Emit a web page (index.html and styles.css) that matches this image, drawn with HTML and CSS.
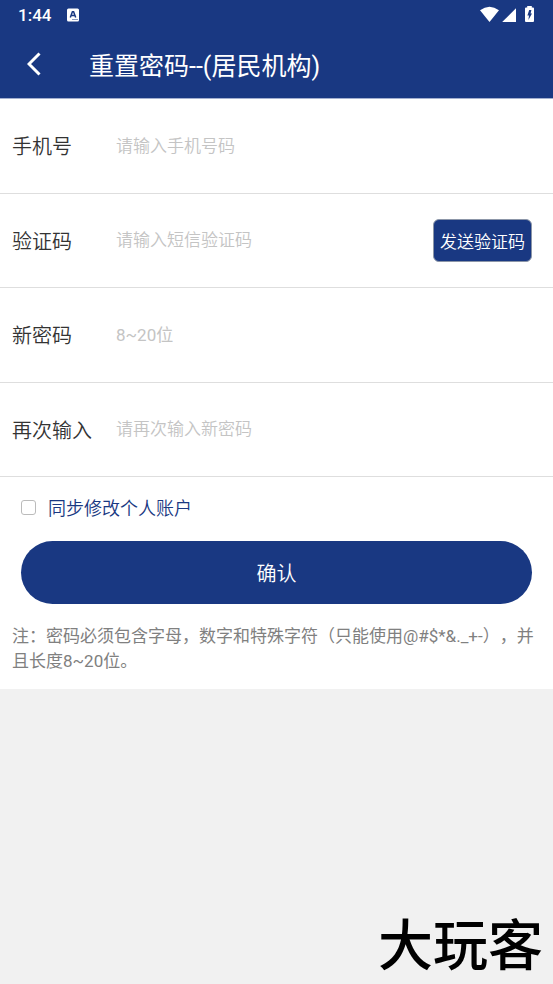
FILE: index.html
```html
<!DOCTYPE html>
<html lang="zh-CN">
<head>
<meta charset="utf-8">
<meta name="viewport" content="width=device-width, initial-scale=1">
<title>重置密码</title>
<link rel="stylesheet" href="styles.css">
</head>
<body>
<header class="top">
  <div class="status">
    <span class="clock">1:44</span>
    <svg class="keyboard" width="12" height="14" viewBox="0 0 12 14" aria-hidden="true">
      <rect width="12" height="13" y="0.5" rx="1.5" fill="#fff"/>
      <path d="M3.3 9.5 5.4 3.8h1.2l2.1 5.7M4.2 7.6h3.6" fill="none" stroke="#193882" stroke-width="1.5"/>
      <path d="M5.5 11.5h5" stroke="#193882" stroke-width="1" stroke-dasharray="1 1"/>
    </svg>
    <svg class="signals" width="56" height="18" viewBox="0 0 56 18" aria-hidden="true">
      <path d="M1 5.2Q10.500-1.800 20 5.200L10.500 17Z" fill="#fff"/>
      <path d="M37 3.200V17H23.200Z" fill="#fff"/>
      <path d="M48.200 1h4.600v1.500H54q1 0 1 1V16q0 1-1 1h-7q-1 0-1-1V3.500q0-1 1-1h1.200Z" fill="#fff"/>
      <path d="M50.200 5h2.200l-.8 3.500h1.400L49.400 15l.6-4.500h-1.600Z" fill="#193882"/>
    </svg>
  </div>
  <div class="bar">
    <button class="back" type="button" aria-label="返回">
      <svg width="14" height="24" viewBox="0 0 14 24" aria-hidden="true"><path d="M12.500 1.500 2 12l10.500 10.500" fill="none" stroke="#fff" stroke-width="3"/></svg>
    </button>
    <h1>重置密码--(居民机构)</h1>
  </div>
</header>
<main>
  <form class="form">
    <div class="fields">
      <div class="row">
        <label for="phone">手机号</label>
        <input id="phone" type="tel" placeholder="请输入手机号码">
      </div>
      <div class="row">
        <label for="code">验证码</label>
        <input id="code" type="text" placeholder="请输入短信验证码">
        <button class="send" type="button">发送验证码</button>
      </div>
      <div class="row">
        <label for="password">新密码</label>
        <input id="password" class="regular" type="password" placeholder="8~20位">
      </div>
      <div class="row">
        <label for="again">再次输入</label>
        <input id="again" type="password" placeholder="请再次输入新密码">
      </div>
    </div>
    <div class="actions">
      <label class="sync"><input type="checkbox">同步修改个人账户</label>
      <button class="confirm" type="submit">确认</button>
    </div>
    <p class="note">注：密码必须包含字母，数字和特殊字符（只能使用@#$*&amp;._+-），并且长度8~20位。</p>
  </form>
</main>
<footer class="brand">大玩客</footer>
</body>
</html>
```
FILE: styles.css
```css
* {
  box-sizing: border-box;
}

body {
  display: flex;
  flex-direction: column;
  min-height: 100vh;
  margin: 0;
  background: #f1f1f1;
  color: #333;
  font-family: Roboto, "Noto Sans CJK SC", sans-serif;
  font-weight: 350;
}

button,
input {
  font: inherit;
}

button {
  padding: 0;
  border: 0;
  background: #193882;
  color: #fff;
}

.top {
  background: #193882;
  color: #fff;
  border-bottom: 1px solid #a3b0d0;
}

.status {
  display: flex;
  align-items: center;
  height: 30px;
  padding: 0 18px;
}

.clock {
  font-size: 17px;
  font-weight: 500;
}

.keyboard {
  margin-left: 16px;
}

.signals {
  margin-left: auto;
  margin-bottom: 2px;
}

.bar {
  display: flex;
  align-items: center;
  height: 68px;
}

.back {
  display: flex;
  margin-left: 27px;
}

h1 {
  margin: 0 0 0 48px;
  font-size: 25px;
  font-weight: 400;
}

.form {
  background: #fff;
}

.fields {
  display: grid;
  grid-auto-rows: 1fr;
  height: 378px;
}

.row {
  display: flex;
  align-items: center;
  padding: 0 21px 0 12px;
  border-bottom: 1px solid #dedede;
}

.row label {
  width: 104px;
  font-size: 20px;
}

.row input {
  flex: 1;
  min-width: 0;
  padding: 0;
  border: 0;
  outline: 0;
  background: none;
  font-size: 17px;
}

.row input::placeholder {
  color: #c4c4c4;
}

.row .regular {
  font-weight: 400;
}

.send {
  height: 43px;
  padding: 0 6px;
  border: 1px solid #8c96a8;
  border-radius: 6px;
  font-size: 17px;
}

.actions {
  display: flex;
  flex-direction: column;
  padding: 0 21px;
}

.sync {
  display: flex;
  align-items: center;
  gap: 12px;
  height: 60px;
  margin-bottom: 4px;
  color: #193882;
  font-size: 18px;
}

.sync input {
  appearance: none;
  width: 15px;
  height: 15px;
  margin: 0;
  border: 1px solid #bbb;
  border-radius: 3px;
}

.sync input:checked {
  background: #193882;
}

.confirm {
  height: 63px;
  border-radius: 32px;
  font-size: 20px;
}

.note {
  margin: 0;
  padding: 20px 12px 15px;
  color: #808080;
  font-size: 17px;
  font-weight: 400;
  line-height: 25px;
  text-spacing-trim: space-all;
}

.brand {
  margin-top: auto;
  padding: 0 10px 10px;
  color: #000;
  font-size: 55px;
  font-weight: 500;
  line-height: 56px;
  text-align: right;
}
```
